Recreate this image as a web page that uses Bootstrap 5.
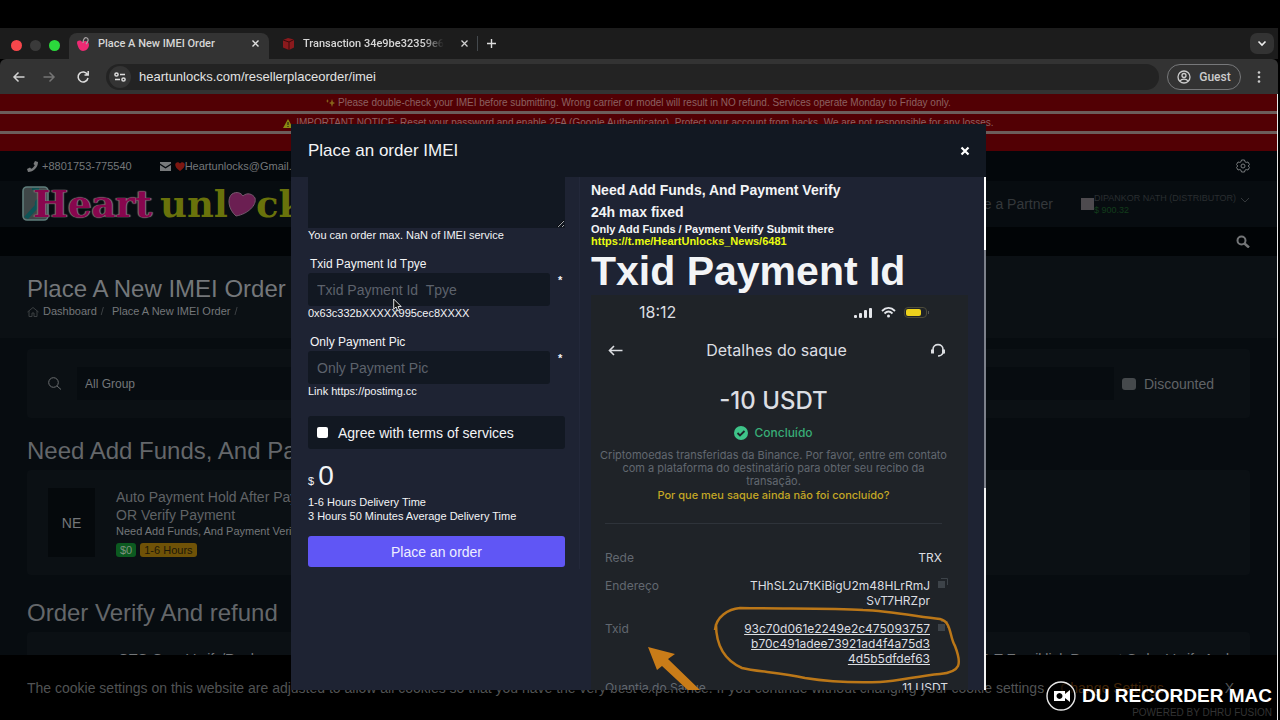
<!DOCTYPE html>
<html lang="en">
<head>
<meta charset="utf-8">
<meta name="viewport" content="width=device-width, initial-scale=1">
<title>Place A New IMEI Order</title>
<link href="https://cdn.jsdelivr.net/npm/bootstrap@5.3.0/dist/css/bootstrap.min.css" rel="stylesheet">
<style>
:root{--ui:"Liberation Sans",Arial,sans-serif;--tech:"Inter","Noto Sans",sans-serif;--chrome:Roboto,"Liberation Sans",sans-serif}
body{background:#000;font-family:var(--ui);font-size:11px;line-height:15px;color:#74777a;padding-top:28px}
svg{display:block;flex:none}
a{color:inherit;text-decoration:none}
button{border:0;background:none;color:inherit;padding:0}
.f12{font-size:12px;line-height:16px}.f14{font-size:14px;line-height:18px}.f24{font-size:24px;line-height:30px}

/* browser */
.top-chrome{margin-right:2px}
.strip{background:#1c1c1c;height:31px;padding:5px 4px 0 11px;font-family:var(--chrome);font-weight:500;color:#d6d6d6}
.dot{width:11px;height:11px;border-radius:50%}
.tab-on{background:#333;border-radius:8px 8px 0 0;width:200px;height:26px;padding:0 9px 5px 7px}
.tab-off{width:204px;height:26px;padding:0 6px 5px 13px}
.fade-end{-webkit-mask-image:linear-gradient(90deg,#000 85%,transparent)}
.chev{width:24px;height:21px;border-radius:7px;background:#333;margin-bottom:5px}
.tools{background:#333;height:35px;padding:0 17px 0 12px;border-radius:6px 6px 0 0;color:#ddd}
.url{background:#232323;border-radius:13px;height:26px;padding-left:3px}
.url-ic{width:22px;height:22px;border-radius:50%;background:#343434}
.url input{background:none;border:0;outline:0;padding:0;color:#e2e2e2;font:13px/18px var(--ui);min-width:0}
.guest{border:1px solid #77787a;border-radius:13px;height:26px;width:74px;font:500 12px/16px var(--chrome);color:#ccc}

/* page */
.site{background:#070c10;margin-right:2px;border-right:1px solid #e8e8e8}
.gut{padding-left:27px;padding-right:27px}
.notice{background:#520004;height:17px;color:#8c6061;text-align:center;white-space:nowrap;overflow:hidden;font-size:10px;line-height:17px}
.notices{background:#6c5d5b;gap:3px}
.topline{background:#03070b;height:30px}
.brand-row{background:#070c10;height:46px;padding-left:22px}
.nav-row{background:#010406;height:29px}
.title-row{background:#0b1014;height:82px;padding-top:18px}
.logo{font-family:"DejaVu Serif","Liberation Serif",serif;font-weight:bold;font-size:37px;line-height:40px;white-space:nowrap}
.logo .pk{color:#88064e;text-shadow:0 0 1px #8a8a8a,1px 0 1px #777,-1px 0 1px #777;margin-left:-16px}
.logo .gr{color:#69720b}
.panel{background:#0b1014;border-radius:4px}
.sel{background:#070c10;border:0;color:#74777a;height:33px;padding:0 8px;appearance:none;min-width:0}
.chk{appearance:none;width:14px;height:12px;border-radius:3px;background:#45494c;margin:0}
.ne{width:47px;height:69px;background:#05090c}
.tag{border-radius:3px;height:14px;line-height:14px;padding:0 4px}
.user{font-size:9px;line-height:12px;color:#2a2e31}
.cookie{background:#000;height:65px;left:0;right:3px;bottom:0;padding:0 27px;color:#515354;white-space:nowrap}

/* order window */
.dlg-wrap{top:124px;left:0;right:3px}
.dlg{width:100%;max-width:695px;height:566px;background:#1e2333;color:#f3f4f6}
.dlg-head{background:#121822;height:53px;padding:0 16px 0 17px;font-size:17px;line-height:20px}
.dlg-body{overflow:hidden;min-height:0}
.col-form{width:289px;padding:0 14px 0 17px;border-right:1px solid #23283a;align-self:flex-start;height:392px}
.fld{background:#121822;border:0;color:#fff;border-radius:3px;width:242px;height:33px;padding:0 9px;font-size:14px;line-height:18px}
.fld::placeholder{color:#5d626c}
textarea.area{background:#121822;border:0;width:100%;height:51px;display:block;border-radius:0;resize:vertical}
.grp{margin-top:13px}
.grp label{display:block;margin-bottom:1px;padding-left:2px;font-size:12px;line-height:16px}
.agree{background:#121822;height:33px;margin-top:17px;padding-left:9px;border-radius:3px;gap:10px}
.agree input{width:11px;height:11px;appearance:none;background:#fff;border-radius:2px;margin:0}
.amount{font-size:28px;line-height:38px}
.times{line-height:14px;margin-bottom:13px}
.go{background:#6056f5;border-radius:3px;height:31px;width:100%;color:#eef}
.col-info{padding:0 16px 0 11px;font-weight:bold;min-width:0}
.big{font-size:41px;line-height:48px;white-space:nowrap}
.yl{color:#e9fb10}
.bar-sc{width:2px;background:linear-gradient(#fff 73px,#7d818b 73px,#7d818b 311px,#f2f2f2 311px)}
.shot{background:#1f2328;font-family:var(--tech);font-weight:normal;color:#dcdee2;height:420px;padding:0 26px 0 14px}
.note-pt{line-height:13px;margin:8px -8px 0;white-space:nowrap}
.muted2{color:#626870}
.hash{width:190px;text-align:right}
.row-kv{font-size:12px;line-height:15px}
.cp{margin-left:8px;margin-right:-6px}
.ink{left:0;top:0}
.cursor{left:102px;top:174px}
.stamp{right:8px;bottom:2px;color:#fff;text-align:right;white-space:nowrap}
.stamp b{font-size:19px;line-height:24px}
.pow{font-size:10px;line-height:10px;margin-top:-3px;color:#333}
</style>
</head>
<body class="d-flex flex-column vh-100 overflow-hidden">
<header class="top-chrome">
  <div class="strip d-flex align-items-end">
    <div class="d-flex gap-2 pb-2 mb-0" style="width:58px"><span class="dot" style="background:#f8474b"></span><span class="dot" style="background:#3a3a3a"></span><span class="dot" style="background:#2bd83c"></span></div>
    <div class="tab-on d-flex align-items-center">
      <svg width="14" height="14" viewBox="0 0 14 14"><path d="M1 6C1 3 5 3 6 5c3-2 7-1 7 3 0 3-3 6-6 6S2 11 1 6z" fill="#ee2a73"/><path d="M7 6c0-4 2-6 4-5s1 4-1 6" fill="none" stroke="#a9a4a6" stroke-width="1.2"/></svg>
      <span class="ms-1 ps-1 flex-grow-1 text-nowrap">Place A New IMEI Order</span>
      <button aria-label="Close tab"><svg width="9" height="9" viewBox="0 0 9 9"><path d="M1.5 1.5l6 6m0-6l-6 6" stroke="#e0e0e0" stroke-width="1.4"/></svg></button>
    </div>
    <div class="tab-off d-flex align-items-center">
      <svg width="13" height="12" viewBox="0 0 13 12"><path d="M1 2l5-2 6 1.500v8L7 12 1 9.500z" fill="#8b1a1d"/><path d="M1 2l6 2 5-2.500M7 4v8" stroke="#3a0a0c" fill="none"/></svg>
      <span class="ms-2 flex-grow-1 text-nowrap fade-end">Transaction 34e9be32359e6</span>
      <button class="ms-3" aria-label="Close tab"><svg width="9" height="9" viewBox="0 0 9 9"><path d="M1.5 1.500l6 6m0-6l-6 6" stroke="#d0d0d0" stroke-width="1.3"/></svg></button>
    </div>
    <div class="border-start border-secondary border-opacity-50 ms-1 ps-2 mb-2"><button class="d-block" aria-label="New tab"><svg width="11" height="15" viewBox="0 0 11 15"><path d="M5.500 3v9M1 7.500h9" stroke="#ddd" stroke-width="1.4"/></svg></button></div>
    <button class="chev ms-auto d-flex align-items-center justify-content-center" aria-label="Search tabs"><svg width="10" height="7" viewBox="0 0 10 7"><path d="M1.500 1.500L5 5l3.500-3.500" fill="none" stroke="#eee" stroke-width="1.600"/></svg></button>
  </div>
  <div class="tools d-flex align-items-center">
    <svg width="14" height="12" viewBox="0 0 14 12"><path d="M12.500 6H2m4.500-4.500L2 6l4.500 4.500" fill="none" stroke="#d2d2d2" stroke-width="1.500"/></svg>
    <svg class="ms-3 me-1" width="14" height="12" viewBox="0 0 14 12"><path d="M1.500 6H12M7.500 1.500L12 6l-4.500 4.500" fill="none" stroke="#757575" stroke-width="1.500"/></svg>
    <svg class="ms-3 me-3" width="14" height="14" viewBox="0 0 14 14"><path d="M11.500 4.500A5 5 0 1 0 12 8M12.200 1v4H8.500" fill="none" stroke="#ddd" stroke-width="1.500"/></svg>
    <div class="url d-flex align-items-center flex-grow-1">
      <span class="url-ic d-flex align-items-center justify-content-center"><svg width="12" height="10" viewBox="0 0 12 10"><g fill="none" stroke="#ddd" stroke-width="1.500"><circle cx="2.500" cy="2.500" r="1.600"/><path d="M6 2.500h5M1 7.500h5"/><circle cx="9.500" cy="7.500" r="1.600"/></g></svg></span>
      <input class="flex-grow-1 ms-1 ps-1" aria-label="Address" value="heartunlocks.com/resellerplaceorder/imei">
    </div>
    <button class="guest d-flex align-items-center justify-content-center gap-2 ms-2"><svg width="14" height="14" viewBox="0 0 14 14"><g fill="none" stroke="#ccc" stroke-width="1.300"><circle cx="7" cy="7" r="6"/><circle cx="7" cy="5.500" r="2"/><path d="M3 11c1.500-2.500 6.500-2.500 8 0"/></g></svg>Guest</button>
    <svg class="ms-3" width="4" height="14" viewBox="0 0 4 14" fill="#ccc"><circle cx="2" cy="2.500" r="1.300"/><circle cx="2" cy="7" r="1.300"/><circle cx="2" cy="11.500" r="1.300"/></svg>
  </div>
</header>

<main class="site flex-grow-1 overflow-hidden">
  <div class="notices d-flex flex-column">
    <div class="notice"><svg class="d-inline-block" width="9" height="8" viewBox="0 0 9 8"><path d="M6 0l1 3 2 1-2 1-1 3-1-3-2-1 2-1zM1.500 0l.5 1.500L3 2 2 2.500 1.500 4 1 2.500 0 2l1-.5z" fill="#86641a"/></svg> Please double-check your IMEI before submitting. Wrong carrier or model will result in NO refund. Services operate Monday to Friday only.</div>
    <div class="notice"><svg class="d-inline-block" width="10" height="9" viewBox="0 0 10 9"><path d="M5 0l5 9H0z" fill="#8b8a12"/><path d="M5 3v3M5 7v1" stroke="#111"/></svg> IMPORTANT NOTICE: Reset your password and enable 2FA (Google Authenticator). Protect your account from hacks. We are not responsible for any losses.</div>
    <div class="notice"></div>
  </div>
  <div class="topline gut d-flex align-items-center">
    <svg width="11" height="11" viewBox="0 0 11 11"><path d="M8 0l3 1C11 6.500 6.500 11 1 11L0 8l3-1.500 1.200 1.300C5.800 7 7 5.800 7.800 4.200L6.500 3z" fill="#77797b"/></svg>
    <span class="ms-1">+8801753-775540</span>
    <svg class="ms-4 me-1" width="15" height="9" viewBox="0 0 15 9"><path d="M4 0h11v1.500L9.500 5 4 1.500zM4 3l5.500 3.500L15 3v6H4z" fill="#77797b"/></svg>
    <svg width="10" height="9" viewBox="0 0 10 9"><path d="M5 9C-4 3 2-2.500 5 1.500 8-2.500 14 3 5 9z" fill="#7d1711"/></svg><a href="#">Heartunlocks@Gmail.com</a>
    <svg class="ms-auto" width="14" height="14" viewBox="0 0 14 14"><g fill="none" stroke="#777a7c"><path d="M5.500 1h3l.5 1.800 1.200.6L12 3l1.500 2.600L12.200 7l1.300 1.400L12 11l-1.800-.4-1.200.6-.5 1.800h-3L5 11.200l-1.200-.6L2 11 .500 8.400 1.800 7 .500 5.600 2 3l1.800.4L5 2.800z"/><circle cx="7" cy="7" r="2"/></g></svg>
  </div>
  <div class="brand-row gut d-flex align-items-center">
    <a href="#" class="logo d-flex align-items-center" aria-label="Heart unlock">
      <svg width="27" height="36" viewBox="0 0 27 36"><rect x="1" y="1" width="25" height="33" rx="4" fill="#3f4748" stroke="#5f7d7b" stroke-width="1.600"/><path d="M10 3h7" stroke="#0e5150" stroke-width="2"/><path d="M2 31L13 19c-1-4 2-7 5-6l-2 4 3 2 3-3c2 3-2 7-6 6L6 33z" fill="#0d5456"/></svg>
      <span class="pk">Heart</span><span class="gr ms-2">unl</span>
      <svg width="28" height="26" viewBox="0 0 28 26"><path d="M8 25C0 18-1 7 4 3c5-3 9-1 11 2 4-4 10-2 12 2 2 7-7 16-19 18z" fill="#6b1f52" stroke="#74596c"/></svg><span class="gr">ck</span>
    </a>
    <a href="#" class="ms-auto f14 pe-4 me-1" style="color:#34383b">Become a Partner</a>
    <span style="width:13px;height:12px;background:#4d4a4e"></span>
    <div class="user">DIPANKOR NATH (DISTRIBUTOR)<br><span style="color:#123c1b">$ 900.32</span></div>
    <svg class="ms-1 mb-2" width="10" height="6" viewBox="0 0 10 6"><path d="M1 1l4 4 4-4" fill="none" stroke="#34383b"/></svg>
  </div>
  <div class="nav-row gut d-flex align-items-center justify-content-end"><svg width="14" height="13" viewBox="0 0 14 13"><g fill="none" stroke="#737577" stroke-width="2"><circle cx="5.500" cy="5.500" r="4"/><path d="M8.500 8.500l4.500 4" stroke-width="2.500"/></g></svg></div>
  <div class="title-row gut">
    <h1 class="f24 fw-normal mb-0">Place A New IMEI Order</h1>
    <nav class="d-flex align-items-center" aria-label="Breadcrumb"><svg width="12" height="10" viewBox="0 0 12 10"><path d="M.5 5L6 .5 11.500 5M2 4v5.500h3V6h2v3.500h3V4" fill="none" stroke="#3c4043"/></svg><a class="ms-1" href="#">Dashboard</a><span class="mx-1 opacity-50">/</span><a class="ms-1" href="#">Place A New IMEI Order</a><span class="mx-1 opacity-50">/</span></nav>
  </div>
  <div class="gut">
    <div class="panel d-flex align-items-center" style="height:69px;padding:0 36px 0 21px;margin-top:11px">
      <svg class="me-3" width="13" height="13" viewBox="0 0 13 13"><g fill="none" stroke="#6b6e70"><circle cx="5.500" cy="5.500" r="4.800"/><path d="M9 9l4 3.500"/></g></svg>
      <select class="sel f12 flex-grow-1" aria-label="Group"><option>All Group</option></select>
      <label class="d-flex align-items-center f14 ms-2" style="color:#606366"><input class="chk me-2" type="checkbox">Discounted</label>
    </div>
    <h2 class="f24 fw-normal mb-0" style="color:#64676a;margin-top:18px">Need Add Funds, And Payment Verify</h2>
    <article class="panel d-flex mt-1" style="height:105px;padding:18px 21px">
      <div class="ne f14 d-flex align-items-center justify-content-center">NE</div>
      <div style="margin-left:21px"><div class="f14" style="width:230px;color:#606366">Auto Payment Hold After Payment OR Verify Payment</div>
        <div>Need Add Funds, And Payment Verify</div>
        <div class="d-flex gap-1 mt-1"><span class="tag" style="background:#0c5a20;color:#7d927f">$0</span><span class="tag" style="background:#6f5207;color:#1d1808">1-6 Hours</span></div></div>
    </article>
    <h2 class="f24 fw-normal mb-0" style="color:#64676a;margin-top:23px">Order Verify And refund</h2>
    <article class="panel d-flex justify-content-between mt-1 f14" style="height:105px;padding:18px 21px"><span style="margin-left:70px">GTO Over Verify/Real</span><span>&amp; T Email link Request Order Verify And</span></article>
  </div>
</main>

<div class="cookie position-absolute d-flex align-items-center f14">
  <span>The cookie settings on this website are adjusted to allow all cookies so that you have the very best experience. If you continue without changing your cookie settings</span>
  <a href="#" class="ms-3" style="color:#402508">Change Settings</a>
  <button class="ms-auto me-3" aria-label="Dismiss">X</button>
</div>

<div class="dlg-wrap position-absolute d-flex justify-content-center">
<section class="dlg d-flex flex-column position-relative" role="dialog" aria-labelledby="dt">
  <div class="dlg-head flex-shrink-0 d-flex align-items-center justify-content-between"><span id="dt">Place an order IMEI</span><button aria-label="Close"><svg width="10" height="10" viewBox="0 0 10 10"><path d="M1.500 1.500l7 7m0-7l-7 7" stroke="#fff" stroke-width="2.200"/></svg></button></div>
  <div class="dlg-body d-flex flex-grow-1">
    <form class="col-form flex-shrink-0">
      <textarea class="area" aria-label="IMEI"></textarea>
      <div>You can order max. NaN of IMEI service</div>
      <div class="grp"><label for="tx">Txid Payment Id Tpye</label><div class="d-flex gap-2"><input id="tx" class="fld" placeholder="Txid Payment Id  Tpye"><b>*</b></div><div>0x63c332bXXXXX995cec8XXXX</div></div>
      <div class="grp"><label for="pic">Only Payment Pic</label><div class="d-flex gap-2"><input id="pic" class="fld" placeholder="Only Payment Pic"><b>*</b></div><div>Link https://postimg.cc</div></div>
      <label class="agree d-flex align-items-center f14"><input type="checkbox">Agree with terms of services</label>
      <div class="d-flex align-items-baseline mt-2 gap-1"><span>$</span><span class="amount">0</span></div>
      <div class="times">1-6 Hours Delivery Time<br>3 Hours 50 Minutes Average Delivery Time</div>
      <button type="button" class="go f14">Place an order</button>
    </form>
    <div class="col-info flex-grow-1">
      <div class="f14" style="line-height:22px;padding-top:2px">Need Add Funds, And Payment Verify<br>24h max fixed</div>
      <div style="line-height:12px">Only Add Funds / Payment Verify Submit there<br><a class="yl" href="#">https://t.me/HeartUnlocks_News/6481</a></div>
      <div class="big">Txid Payment Id</div>
      <div class="shot position-relative">
        <div class="d-flex align-items-center" style="padding:7px 12px 0 34px"><span style="font-size:16px;line-height:20px" class="me-auto">18:12</span>
          <svg width="20" height="11" viewBox="0 0 20 11" fill="#e4e6ea"><rect x="1" y="8" width="3" height="3" rx="1"/><rect x="6" y="6" width="3" height="5" rx="1"/><rect x="11" y="3" width="3" height="8" rx="1"/><rect x="16" y="1" width="3" height="10" rx="1"/></svg>
          <svg class="mx-2" width="15" height="11" viewBox="0 0 15 11"><g fill="none" stroke="#e4e6ea" stroke-width="1.800"><path d="M1 4c4-4 9-4 13 0M3.500 6.500c2.500-2.500 5.500-2.500 8 0"/></g><circle cx="7.500" cy="9" r="1.500" fill="#e4e6ea"/></svg>
          <svg width="26" height="11" viewBox="0 0 26 11"><rect x=".5" y=".5" width="22" height="10" rx="3.500" fill="none" stroke="#4c4b3a"/><rect x="2" y="2" width="15" height="7" rx="2" fill="#eed21c"/><path d="M24.500 4v3" stroke="#555"/></svg></div>
        <div class="d-flex align-items-center justify-content-between" style="padding:18px 0 0 3px;margin-right:-4px"><svg width="15" height="11" viewBox="0 0 15 11"><path d="M14.500 5.500H1.500M6 1L1.500 5.500 6 10" fill="none" stroke="#dcdee2" stroke-width="1.600"/></svg><span style="font-size:16px;line-height:20px">Detalhes do saque</span>
          <svg width="16" height="14" viewBox="0 0 16 14"><path d="M3 10V6.500C3 0 13 0 13 6.500V10c-1 2-3 3-5 3" fill="none" stroke="#dcdee2" stroke-width="1.600"/><path d="M1 6.500h3v4H1zM12 6.500h3v4h-3z" fill="#dcdee2"/></svg></div>
        <div class="text-center" style="padding-top:27px;font-size:24px;line-height:28px;font-weight:500">-10 USDT</div>
        <div class="d-flex align-items-center justify-content-center f12" style="color:#38ad77;margin-top:10px;gap:6px;font-weight:500"><svg width="14" height="14" viewBox="0 0 14 14"><circle cx="7" cy="7" r="7" fill="#3ec489"/><path d="M3.500 7l2.500 2.500 4.500-4.500" fill="none" stroke="#1f2328" stroke-width="1.800"/></svg>Concluído</div>
        <div class="note-pt text-center muted2">Criptomoedas transferidas da Binance. Por favor, entre em contato<br>com a plataforma do destinatário para obter seu recibo da<br>transação.</div>
        <div class="text-center"><a href="#" style="color:#c4a725;font-weight:500">Por que meu saque ainda não foi concluído?</a></div>
        <hr class="mb-0" style="margin-top:20px;border-color:#5a6470">
        <div class="row-kv d-flex justify-content-between" style="margin-top:26px"><span class="muted2">Rede</span><span>TRX</span></div>
        <div class="row-kv d-flex" style="margin-top:13px"><span class="muted2 me-auto">Endereço</span><span class="hash">THhSL2u7tKiBigU2m48HLrRmJ<br>SvT7HRZpr</span><svg class="cp" width="10" height="10" viewBox="0 0 10 10"><path d="M0 3h7v7H0z" fill="#3d4349"/><path d="M3 .5h6.500V7" stroke="#3d4349" fill="none"/></svg></div>
        <div class="row-kv d-flex" style="margin-top:13px"><span class="muted2 me-auto">Txid</span><a href="#" class="hash text-decoration-underline">93c70d061e2249e2c475093757<br>b70c491adee73921ad4f4a75d3<br>4d5b5dfdef63</a><svg class="cp" width="10" height="10" viewBox="0 0 10 10"><path d="M0 3h7v7H0z" fill="#3d4349"/><path d="M3 .5h6.500V7" stroke="#3d4349" fill="none"/></svg></div>
        <div class="row-kv d-flex justify-content-between" style="margin-top:14px"><span class="muted2">Quantia do Saque</span><span style="margin-right:-6px">11 USDT</span></div>
        <svg class="ink position-absolute" width="379" height="400" viewBox="591 295 379 400"><path d="M715 630C716 617 728 609 740 608 780 609 830 608 863 610 890 611 920 617 940 619 952 622 949 636 955 646 962 664 961 672 940 674 917 676 900 681 880 682 850 683 830 682 805 678 780 672 757 672 742 668 724 660 716 646 716 624" fill="none" stroke="#bb7718" stroke-width="2.500"/><path d="M648 647l27 7-7 5 32 31 0 4-9-1-29-27-5 4z" fill="#c97c18"/></svg>
      </div>
    </div>
    <div class="bar-sc flex-shrink-0"></div>
  </div>
  <svg class="cursor position-absolute" width="9" height="14" viewBox="0 0 9 14"><path d="M.7 1v10l2.400-2 1.700 4 1.800-.8L5 8.500h3.200z" fill="#111" stroke="#ddd"/></svg>
</section>
</div>

<div class="stamp position-absolute">
  <div class="d-flex align-items-center"><svg class="me-1" width="32" height="30" viewBox="0 0 32 30"><circle cx="15" cy="15" r="14" fill="#0008" stroke="#e8e8e8" stroke-width="1.400"/><path fill-rule="evenodd" d="M8 10h11v3l5-4v12l-5-4v3H8zM13.500 12a3 3 0 1 0 .01 0" fill="#fff"/></svg><b>DU RECORDER MAC</b></div>
  <div class="pow">POWERED BY DHRU FUSION</div>
</div>
<script src="https://cdn.jsdelivr.net/npm/bootstrap@5.3.0/dist/js/bootstrap.bundle.min.js"></script>
</body>
</html>
